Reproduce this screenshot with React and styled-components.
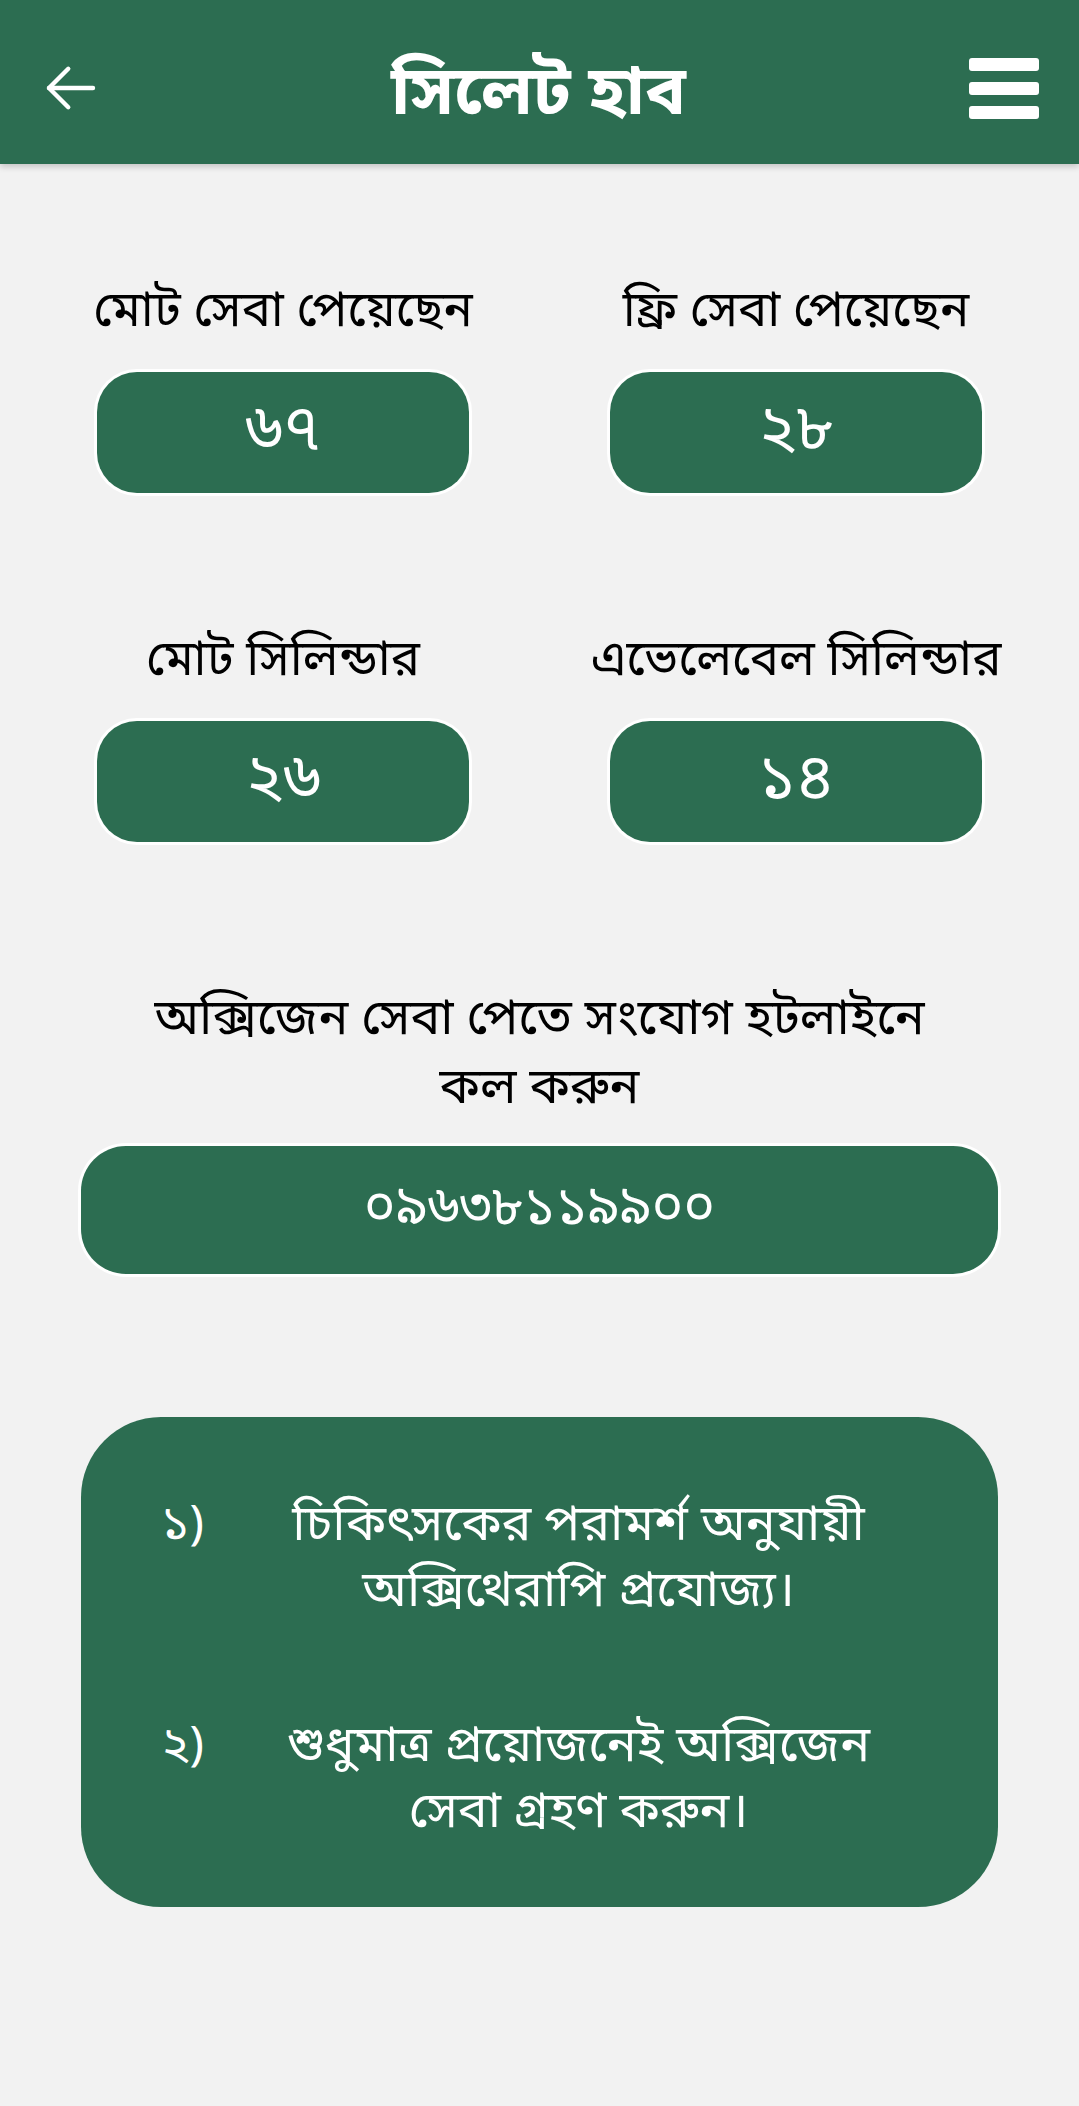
import React from 'react';
import styled, { createGlobalStyle } from 'styled-components';

const GREEN = '#2c6d51';

const GlobalStyle = createGlobalStyle`
  html, body {
    margin: 0;
    padding: 0;
    background: #f2f2f2;
  }
  body {
    font-family: "Noto Sans Bengali", "Lohit Bengali", "Noto Sans", sans-serif;
    color: #000;
  }
`;

const Page = styled.div`
  min-height: 2106px;
  background: #f2f2f2;
`;

const Header = styled.header`
  height: 164px;
  background: ${GREEN};
  display: grid;
  grid-template-columns: 1fr auto 1fr;
  align-items: center;
  padding: 12px 40px 0 38px;
  box-shadow: 0 3px 6px rgba(0, 0, 0, 0.18);
  box-sizing: border-box;
`;

const BackButton = styled.button`
  justify-self: start;
  background: none;
  border: none;
  padding: 0;
  width: 66px;
  height: 66px;
  display: flex;
  align-items: center;
  justify-content: center;
  cursor: pointer;
`;

const Title = styled.h1`
  margin: 18px 0 0;
  color: #fff;
  font-size: 68px;
  font-weight: 700;
  line-height: 1;
`;

const MenuButton = styled.button`
  justify-self: end;
  background: none;
  border: none;
  padding: 0;
  width: 70px;
  display: flex;
  flex-direction: column;
  gap: 11px;
  cursor: pointer;
`;

const MenuBar = styled.span`
  display: block;
  height: 13px;
  width: 70px;
  background: #fff;
  border-radius: 3px;
`;

const Main = styled.main`
  padding: 120px 81px 0;
`;

const StatGrid = styled.div`
  display: grid;
  grid-template-columns: 372px 372px;
  justify-content: center;
  column-gap: 141px;
  row-gap: 140px;
`;

const StatItem = styled.div`
  display: flex;
  flex-direction: column;
  align-items: center;
`;

const Label = styled.div`
  font-size: 49px;
  line-height: 60px;
  white-space: nowrap;
  margin-bottom: 28px;
`;

const Pill = styled.div`
  box-sizing: border-box;
  width: 100%;
  height: ${(p) => p.$height || '121px'};
  border-radius: ${(p) => p.$radius || '40px'};
  background: ${GREEN};
  box-shadow: 0 0 0 3px #fff;
  color: #fff;
  font-size: ${(p) => p.$size || '64px'};
  display: flex;
  align-items: center;
  justify-content: center;
`;

const Hotline = styled.section`
  margin-top: 145px;
  display: flex;
  flex-direction: column;
  align-items: center;
`;

const HotlineText = styled.p`
  margin: 0 0 21px;
  font-size: 50px;
  line-height: 69px;
  text-align: center;
`;

const Notice = styled.section`
  margin-top: 143px;
  background: ${GREEN};
  border-radius: 80px;
  padding: 77px 90px 60px 80px;
  display: flex;
  flex-direction: column;
  gap: 89px;
  color: #fff;
`;

const NoticeItem = styled.div`
  display: grid;
  grid-template-columns: 88px 1fr;
  align-items: start;
`;

const ItemNumber = styled.span`
  font-size: 48px;
  line-height: 66px;
`;

const ItemText = styled.span`
  font-size: 50px;
  line-height: 66px;
  text-align: center;
`;

const stats = [
  { label: 'মোট সেবা পেয়েছেন', value: '৬৭' },
  { label: 'ফ্রি সেবা পেয়েছেন', value: '২৮' },
  { label: 'মোট সিলিন্ডার', value: '২৬' },
  { label: 'এভেলেবেল সিলিন্ডার', value: '১৪' },
];

const notices = [
  { n: '১)', lines: ['চিকিৎসকের পরামর্শ অনুযায়ী', 'অক্সিথেরাপি প্রযোজ্য।'] },
  { n: '২)', lines: ['শুধুমাত্র প্রয়োজনেই অক্সিজেন', 'সেবা গ্রহণ করুন।'] },
];

export default function App() {
  return (
    <Page>
      <GlobalStyle />
      <Header>
        <BackButton aria-label="back">
          <svg width="66" height="66" viewBox="0 0 24 24" fill="none" stroke="#fff" strokeWidth="1.6" strokeLinecap="round" strokeLinejoin="round">
            <path d="M20 12H4" />
            <path d="M11 5l-7 7 7 7" />
          </svg>
        </BackButton>
        <Title>সিলেট হাব</Title>
        <MenuButton aria-label="menu">
          <MenuBar />
          <MenuBar />
          <MenuBar />
        </MenuButton>
      </Header>

      <Main>
        <StatGrid>
          {stats.map((s) => (
            <StatItem key={s.label}>
              <Label>{s.label}</Label>
              <Pill>{s.value}</Pill>
            </StatItem>
          ))}
        </StatGrid>

        <Hotline>
          <HotlineText>
            অক্সিজেন সেবা পেতে সংযোগ হটলাইনে
            <br />
            কল করুন
          </HotlineText>
          <Pill $height="128px" $radius="45px" $size="54px">০৯৬৩৮১১৯৯০০</Pill>
        </Hotline>

        <Notice>
          {notices.map((item) => (
            <NoticeItem key={item.n}>
              <ItemNumber>{item.n}</ItemNumber>
              <ItemText>
                {item.lines[0]}
                <br />
                {item.lines[1]}
              </ItemText>
            </NoticeItem>
          ))}
        </Notice>
      </Main>
    </Page>
  );
}
